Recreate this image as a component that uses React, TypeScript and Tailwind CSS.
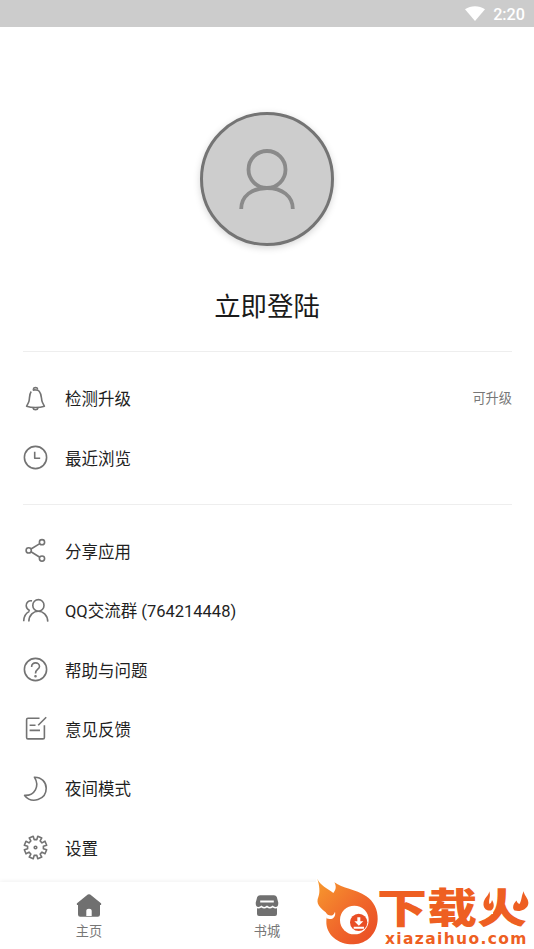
import type { ReactNode } from 'react';

// Outline of the settings cog: eight teeth around a 25x25 box
const gearPath = Array.from({ length: 8 }, (_, i) => {
    const base = i * 45 + 22.5;
    const point = (deg: number, r: number) => {
        const a = ((base + deg) * Math.PI) / 180;
        return `${(12.5 + r * Math.cos(a)).toFixed(2)} ${(12.5 + r * Math.sin(a)).toFixed(2)}`;
    };
    return `${i === 0 ? 'M' : 'L'}${point(-13, 8)}L${point(-11, 11.4)}L${point(11, 11.4)}L${point(13, 8)}`;
}).join('') + 'Z';

type Item = {
    label: string;
    icon: ReactNode;
    note?: string;
};

const accountItems: Item[] = [
    {
        label: '检测升级',
        note: '可升级',
        icon: (
            <>
                <path d="M8.2 5.5C6.3 8 6.7 12 6 15.2C5.5 17.5 4 18.7 3.6 20.2C8.5 22 16.5 22 21.4 20.2C21 18.7 19.5 17.5 19 15.2C18.2 12 18.7 8 16.2 5.2C14.8 3.8 11.2 3.6 9.7 4.2" />
                <path d="M10.6 3.7V2.6C10.6 1.3 14.4 1.3 14.4 2.6V3.7M10 22C10.5 24.3 14.5 24.3 15 22" />
            </>
        ),
    },
    {
        label: '最近浏览',
        icon: (
            <>
                <circle cx="12.5" cy="12.5" r="11.1" />
                <path d="M11.7 6.8V13.2H17.2" />
            </>
        ),
    },
];

const appItems: Item[] = [
    {
        label: '分享应用',
        icon: (
            <>
                <circle cx="19" cy="4.2" r="2.6" />
                <circle cx="5.7" cy="12.4" r="2.6" />
                <circle cx="19" cy="20.6" r="2.6" />
                <path d="M16.8 5.6L8 11M8 13.8L16.8 19.2" />
            </>
        ),
    },
    {
        label: 'QQ交流群 (764214448)',
        icon: (
            <>
                <ellipse cx="15.4" cy="7.4" rx="5.6" ry="5.8" />
                <path d="M5.8 23.6C6.2 9.8 24.2 9.8 24.8 23.6" />
                <path d="M9 2.9C5.8 2.2 2.9 4.5 3.2 7.8C3.3 10.1 4.8 11.8 6.8 12.8M6.4 13.4C3 15 .8 18.5 .7 23.2" />
            </>
        ),
    },
    {
        label: '帮助与问题',
        icon: (
            <>
                <circle cx="12.5" cy="12.5" r="11.1" />
                <path d="M8.6 10C8.4 4.6 16.6 4.6 16.5 9.5C16.4 12.4 12.5 12 12.5 16.4" />
                <circle cx="12.5" cy="19.2" r=".5" fill="currentColor" />
            </>
        ),
    },
    {
        label: '意见反馈',
        icon: (
            <>
                <path d="M16.5 2.3H5Q3.6 2.3 3.6 3.7V21.5Q3.6 22.9 5 22.9H20Q21.4 22.9 21.4 21.5V9.2" />
                <path d="M23.2 1.2L15.2 9.2M6.6 9.3H12.5M6.6 14.4H17" />
            </>
        ),
    },
    {
        label: '夜间模式',
        icon: <path d="M11.4 1.2C18.5 1 23.2 6.3 23.2 12.3C23.2 24 8.5 28.2 1.6 19.4C11.7 19.8 17 10.2 11.4 1.2Z" />,
    },
    {
        label: '设置',
        icon: (
            <>
                <path d={gearPath} />
                <circle cx="12.5" cy="12.5" r="1.3" />
            </>
        ),
    },
];

function MenuRow({ item }: { item: Item }) {
    return (
        <li className="flex h-[59.35px] items-center">
            <svg
                className="h-[25px] w-[25px] shrink-0 overflow-visible text-[#737373]"
                viewBox="0 0 25 25"
                fill="none"
                stroke="currentColor"
                strokeWidth="1.6"
                strokeLinejoin="round"
            >
                {item.icon}
            </svg>
            <span className="ml-[17px] flex-1 pt-[5px] text-[16.5px] text-[#1f1f1f]">{item.label}</span>
            {item.note && <span className="pt-0.5 text-[13.2px] text-[#777]">{item.note}</span>}
        </li>
    );
}

function StatusBar() {
    return (
        <header className="flex h-[27px] items-center justify-end bg-[#ccc] pr-[9px] text-white">
            <svg className="h-[15px] w-5" viewBox="0 0 20 15" fill="currentColor">
                <path d="M0 3.2C6-.9 14-.9 20 3.2L10 15Z" />
            </svg>
            <span className="ml-2 pt-[3px] text-[16.2px] font-medium">2:20</span>
        </header>
    );
}

function Avatar() {
    return (
        <div className="flex h-[134px] w-[134px] items-center justify-center rounded-full border-[3.5px] border-[#747474] bg-[#cdcdcd] shadow-[0_2px_7px_rgba(0,0,0,0.17)]">
            <svg className="h-[62px] w-[58px]" viewBox="0 0 58 62" fill="none" stroke="#8a8a8a" strokeWidth="3.8">
                <circle cx="29" cy="21.5" r="18.5" />
                <path d="M3.2 61C3.2 48 14 40 29 40S54.8 48 54.8 61" />
            </svg>
        </div>
    );
}

function BottomNav() {
    return (
        <nav className="grid h-[67px] shrink-0 grid-cols-3 bg-white text-[13.2px] text-[#777] shadow-[0_-1px_4px_rgba(0,0,0,0.06)]">
            <div className="flex flex-col items-center pt-3">
                <svg className="h-[23px] w-[26px]" viewBox="0 0 26 23" fill="#707070">
                    <path
                        fillRule="evenodd"
                        d="M11.8.6Q13-.3 14.2.6L25 9.2Q25.8 11 24 11V20.5Q24 22.7 21.8 22.7H4.2Q2 22.7 2 20.5V11Q.2 11 1 9.2ZM10.3 22V17Q10.3 14.7 13 14.7T15.7 17V22Z"
                    />
                </svg>
                <span className="mt-[5px] leading-5">主页</span>
            </div>
            <div className="flex flex-col items-center pt-3">
                <svg className="h-[23px] w-6" viewBox="0 0 24 23" fill="#707070">
                    <path
                        fillRule="evenodd"
                        d="M5 1.2H19Q21 1.2 21.8 3L23.3 8.8Q23.5 13 20.5 13Q18.8 13 17.7 11.6Q14.8 14.4 12 11.6Q9.2 14.4 6.3 11.6Q5.2 13 3.5 13Q.5 13 .7 8.8L2.2 3Q3 1.2 5 1.2ZM5.2 6.5V8.5H18.8V6.5Z"
                    />
                    <path d="M2 14.3Q4.5 14.8 6.3 13.5Q9.2 15.7 12 13.5Q14.8 15.7 17.7 13.5Q19.5 14.8 22 14.3V20Q22 22 20 22H4Q2 22 2 20Z" />
                </svg>
                <span className="mt-[5px] leading-5">书城</span>
            </div>
        </nav>
    );
}

function SiteBadge() {
    return (
        <div className="absolute right-0 bottom-0 flex h-[71px] w-[218px] bg-white text-[#ee5f22]">
            <svg className="h-[70px] w-[62px] shrink-0 overflow-visible" viewBox="18 27 186 210">
                <defs>
                    <linearGradient id="flame" x1="0" y1="0" x2="1" y2="1">
                        <stop offset="0" stopColor="#f79a2e" />
                        <stop offset=".55" stopColor="#f0672b" />
                        <stop offset="1" stopColor="#e94a24" />
                    </linearGradient>
                </defs>
                <path
                    fill="url(#flame)"
                    d="M22 29C31 50 52 57 70 72C79 61 79 51 73 40C97 58 136 60 169 82C191 97 204 122 203 151C202 193 172 225 131 226C84 227 48 196 49 158C49 147 52 137 47 130C29 116 17 103 25 84C31 69 28 48 22 29Z"
                />
                <path fill="#fff" d="M46 129C54 142 70 145 75 128C79 145 65 155 49 148Z" />
                <circle cx="133" cy="153" r="43" fill="#fff" />
                <circle cx="146" cy="160" r="26" fill="#e94e25" />
                <path fill="#fff" d="M142 145H151V157H160L146.5 170L133 157H142ZM131 173H162V179H131Z" />
            </svg>
            <div className="relative flex-1 whitespace-nowrap">
                <div className="mt-[11px] ml-[-1px] h-10 w-[123px] origin-left scale-x-[1.22] text-[41px] leading-10 font-black">
                    下载火
                </div>
                {/* small flames on both sides of the last character */}
                <svg className="absolute top-[12px] left-[99px] h-6 w-[57px]" viewBox="0 0 57 24">
                    <path fill="#fff" d="M2 0H17L16 24H2ZM33 0H57V24H39L33 18Z" />
                    <path
                        fill="#ee5f22"
                        d="M12 1C13 5 6 8 6.500 15C7 19 10 21 14 20.500C18 18 17 13 15 10C14.500 12 14 13 12.500 14C11 10 14.500 6 12 1ZM47 1C46 5 53 9 51 15C49 20 43 22 37.500 20.500C35 18 36 14 39.500 10.500C40 12.500 41 13.500 42.500 14C45 10 44 6 47 1Z"
                    />
                </svg>
                <div className="mt-px ml-[7px] font-['DejaVu_Sans'] text-[15.5px] leading-[18px] font-bold tracking-[1.35px]">
                    xiazaihuo.com
                </div>
            </div>
        </div>
    );
}

export default function App() {
    return (
        <div className="relative flex h-[949px] w-full flex-col overflow-hidden bg-white font-[Roboto,'Noto_Sans_CJK_SC',sans-serif]">
            <StatusBar />
            <main className="flex flex-1 flex-col pt-[85px] pr-[22px] pl-[23px]">
                <section className="mr-px flex flex-col items-center">
                    <Avatar />
                    <h1 className="mt-[41px] text-[26.4px] leading-10 text-[#1a1a1a]">立即登陆</h1>
                </section>
                <ul className="mt-6 border-t border-[#eee] pt-[16.4px] pb-[16.6px]">
                    {accountItems.map(item => <MenuRow key={item.label} item={item} />)}
                </ul>
                <ul className="border-t border-[#eee] pt-[16.6px]">
                    {appItems.map(item => <MenuRow key={item.label} item={item} />)}
                </ul>
            </main>
            <BottomNav />
            <SiteBadge />
        </div>
    );
}
